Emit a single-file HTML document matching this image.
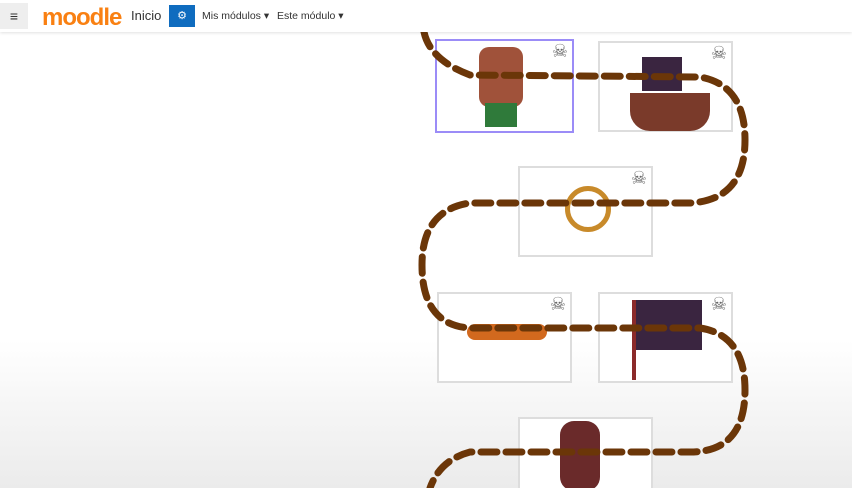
<!DOCTYPE html>
<html><head><meta charset="utf-8"><style>
*{margin:0;padding:0;box-sizing:border-box}
html,body{width:852px;height:488px;overflow:hidden}
body{font-family:"Liberation Sans",sans-serif;background:linear-gradient(#fff 0,#fff 340px,#ebebeb 488px);position:relative}
.nav{position:absolute;left:0;top:0;width:852px;height:32px;background:#fff;box-shadow:0 1px 3px rgba(0,0,0,.12);z-index:5}
.ham{position:absolute;left:0;top:3px;width:28px;height:26px;background:#eee;font-size:14px;text-align:center;line-height:26px;color:#333}
.logo{position:absolute;left:42px;top:4px;font-size:24px;font-weight:bold;color:#f98012;letter-spacing:-1px}
.inicio{position:absolute;left:131px;top:8px;font-size:13px;color:#333}
.cog{position:absolute;left:169px;top:5px;width:26px;height:22px;background:#0f6cbf;color:#fff;font-size:11px;text-align:center;line-height:22px}
.menu{position:absolute;top:10px;font-size:10.5px;color:#333}
.box{position:absolute;border:2px solid #ddd;background:#fff}
.sk{position:absolute;right:4px;top:0px;font-size:18px;color:#666}
</style></head><body>
<div class="nav">
<div class="ham">≡</div>
<div class="logo">moodle</div>
<div class="inicio">Inicio</div>
<div class="cog">⚙</div>
<div class="menu" style="left:202px">Mis módulos ▾</div>
<div class="menu" style="left:277px">Este módulo ▾</div>
</div>
<div class="box" style="left:435px;top:39px;width:139px;height:94px;border-color:#9b8cf7"><span class="sk">☠</span>
<div style="position:absolute;left:42px;top:6px;width:44px;height:60px;background:#a0523a;border-radius:10px"></div>
<div style="position:absolute;left:48px;top:62px;width:32px;height:24px;background:#2f7a3a"></div></div>
<div class="box" style="left:598px;top:41px;width:135px;height:91px"><span class="sk">☠</span>
<div style="position:absolute;left:30px;top:50px;width:80px;height:38px;background:#7a3a2a;border-radius:0 0 20px 20px"></div>
<div style="position:absolute;left:42px;top:14px;width:40px;height:34px;background:#3a2540"></div></div>
<div class="box" style="left:518px;top:166px;width:135px;height:91px"><span class="sk">☠</span>
<div style="position:absolute;left:45px;top:18px;width:46px;height:46px;border:5px solid #c88a2a;border-radius:50%"></div></div>
<div class="box" style="left:437px;top:292px;width:135px;height:91px"><span class="sk">☠</span>
<div style="position:absolute;left:28px;top:30px;width:80px;height:16px;background:#d2691e;border-radius:8px"></div></div>
<div class="box" style="left:598px;top:292px;width:135px;height:91px"><span class="sk">☠</span>
<div style="position:absolute;left:32px;top:6px;width:4px;height:80px;background:#8b2a2a"></div>
<div style="position:absolute;left:36px;top:6px;width:66px;height:50px;background:#3a2540"></div></div>
<div class="box" style="left:518px;top:417px;width:135px;height:80px">
<div style="position:absolute;left:40px;top:2px;width:40px;height:70px;background:#6a2a2a;border-radius:14px"></div></div>
<svg width="852" height="488" style="position:absolute;left:0;top:0;z-index:3" fill="none">
<path d="M424 32 Q430 60 470 75 L700 77 Q745 85 745 140 Q745 200 690 203 L470 203 Q422 210 422 265 Q422 325 470 328 L700 328 Q745 335 745 390 Q745 452 690 452 L470 452 Q440 460 430 488" stroke="#6b3608" stroke-width="7" stroke-dasharray="16 9" stroke-linecap="round"/>
</svg>
</body></html>
